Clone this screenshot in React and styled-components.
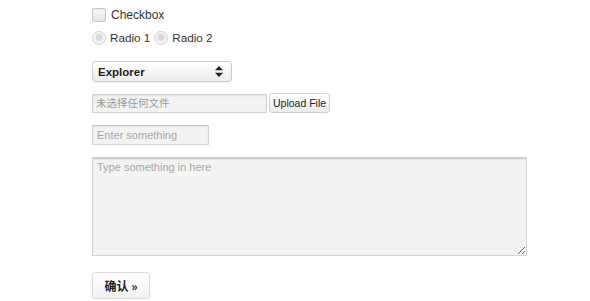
import React from 'react'
import styled, { createGlobalStyle } from 'styled-components';

const Global = createGlobalStyle`
body{
  margin:0;
  background:#fff;
  font-family:"Liberation Sans", Arial, "Noto Sans CJK SC", sans-serif;
  font-size:12px;
  color:#333;
}
`;

const App = () => {
  return (
    <>
      <Global />
      <Page>
        <CheckRow>
          <CheckBox />
          <span>Checkbox</span>
        </CheckRow>
        <RadioRow>
          <Radio />
          <span>Radio 1</span>
          <Radio />
          <span>Radio 2</span>
        </RadioRow>
        <SelectBox>
          <span>Explorer</span>
          <svg width="8" height="11" viewBox="0 0 8 11">
            <path d="M4 0 L8 4.2 L0 4.2 Z M0 6.8 L8 6.8 L4 11 Z" fill="#222" />
          </svg>
        </SelectBox>
        <FileRow>
          <FileField>未选择任何文件</FileField>
          <SmallButton>Upload File</SmallButton>
        </FileRow>
        <TextInput placeholder="Enter something" />
        <TextArea placeholder="Type something in here" />
        <SubmitButton>确认 »</SubmitButton>
      </Page>
    </>
  )
}

export default App

const Page = styled.div`
padding:8px 0 0 92px;
display:flex;
flex-direction:column;
align-items:flex-start;
`;

const CheckRow = styled.div`
display:flex;
align-items:center;
gap:5px;
height:13px;
font-size:12px;
color:#333;
`;

const CheckBox = styled.span`
width:12px;
height:12px;
border:1px solid #c8c8c8;
border-radius:2px;
background:linear-gradient(#f7f7f7,#e4e4e4);
box-shadow:inset 0 1px 1px rgba(0,0,0,0.06);
`;

const RadioRow = styled(CheckRow)`
margin-top:10px;
gap:4px;
font-size:11.7px;
`;

const Radio = styled.span`
width:12px;
height:12px;
border-radius:50%;
border:1px solid #d4d4d4;
background:radial-gradient(circle at 50% 45%, #d8d8d8 0 3px, #f3f3f3 4px);
`;

const SelectBox = styled.div`
margin-top:17px;
width:125px;
height:19px;
padding:0 8px 0 5px;
border:1px solid #cdcdcd;
border-radius:3px;
background:linear-gradient(#ffffff,#ececec);
display:flex;
align-items:center;
justify-content:space-between;
font-size:11.5px;
font-weight:bold;
color:#222;
box-shadow:0 1px 1px rgba(0,0,0,0.05);
`;

const FileRow = styled.div`
margin-top:11px;
display:flex;
align-items:center;
gap:2px;
`;

const FileField = styled.div`
width:170px;
height:17px;
padding:0 0 0 3px;
border:1px solid #d0d0d0;
background:#f3f3f3;
box-shadow:inset 0 1px 2px rgba(0,0,0,0.08);
font-family:"Noto Sans CJK SC", sans-serif;
font-size:10.5px;
line-height:15px;
color:#9a9a9a;
`;

const SmallButton = styled.button`
height:20px;
padding:0 3px;
border:1px solid #cfcfcf;
border-radius:3px;
background:linear-gradient(#ffffff,#ececec);
font-family:"Liberation Sans", Arial, sans-serif;
font-size:10.5px;
color:#222;
`;

const TextInput = styled.input`
margin-top:12px;
width:117px;
height:20px;
box-sizing:border-box;
padding:0 4px;
border:1px solid #d4d4d4;
border-top-color:#c4c4c4;
background:#f3f3f3;
box-shadow:inset 0 1px 2px rgba(0,0,0,0.08);
font-family:"Liberation Sans", Arial, sans-serif;
font-size:11px;
outline:none;
&::placeholder{ color:#a8a8a8; }
`;

const TextArea = styled.textarea`
margin-top:12px;
width:435px;
height:99px;
box-sizing:border-box;
padding:2px 4px;
border:1px solid #d4d4d4;
border-top:2px solid #cfcfcf;
background:#f3f3f3;
box-shadow:inset 0 1px 2px rgba(0,0,0,0.06);
font-family:"Liberation Sans", Arial, sans-serif;
font-size:11px;
outline:none;
resize:both;
&::placeholder{ color:#a8a8a8; }
`;

const SubmitButton = styled.button`
margin-top:16px;
width:58px;
height:27px;
border:1px solid #dcdcdc;
border-radius:3px;
background:linear-gradient(#ffffff,#f2f2f2);
box-shadow:0 1px 2px rgba(0,0,0,0.1);
font-family:"Noto Sans CJK SC", sans-serif;
font-weight:bold;
font-size:12px;
color:#222;
`;
